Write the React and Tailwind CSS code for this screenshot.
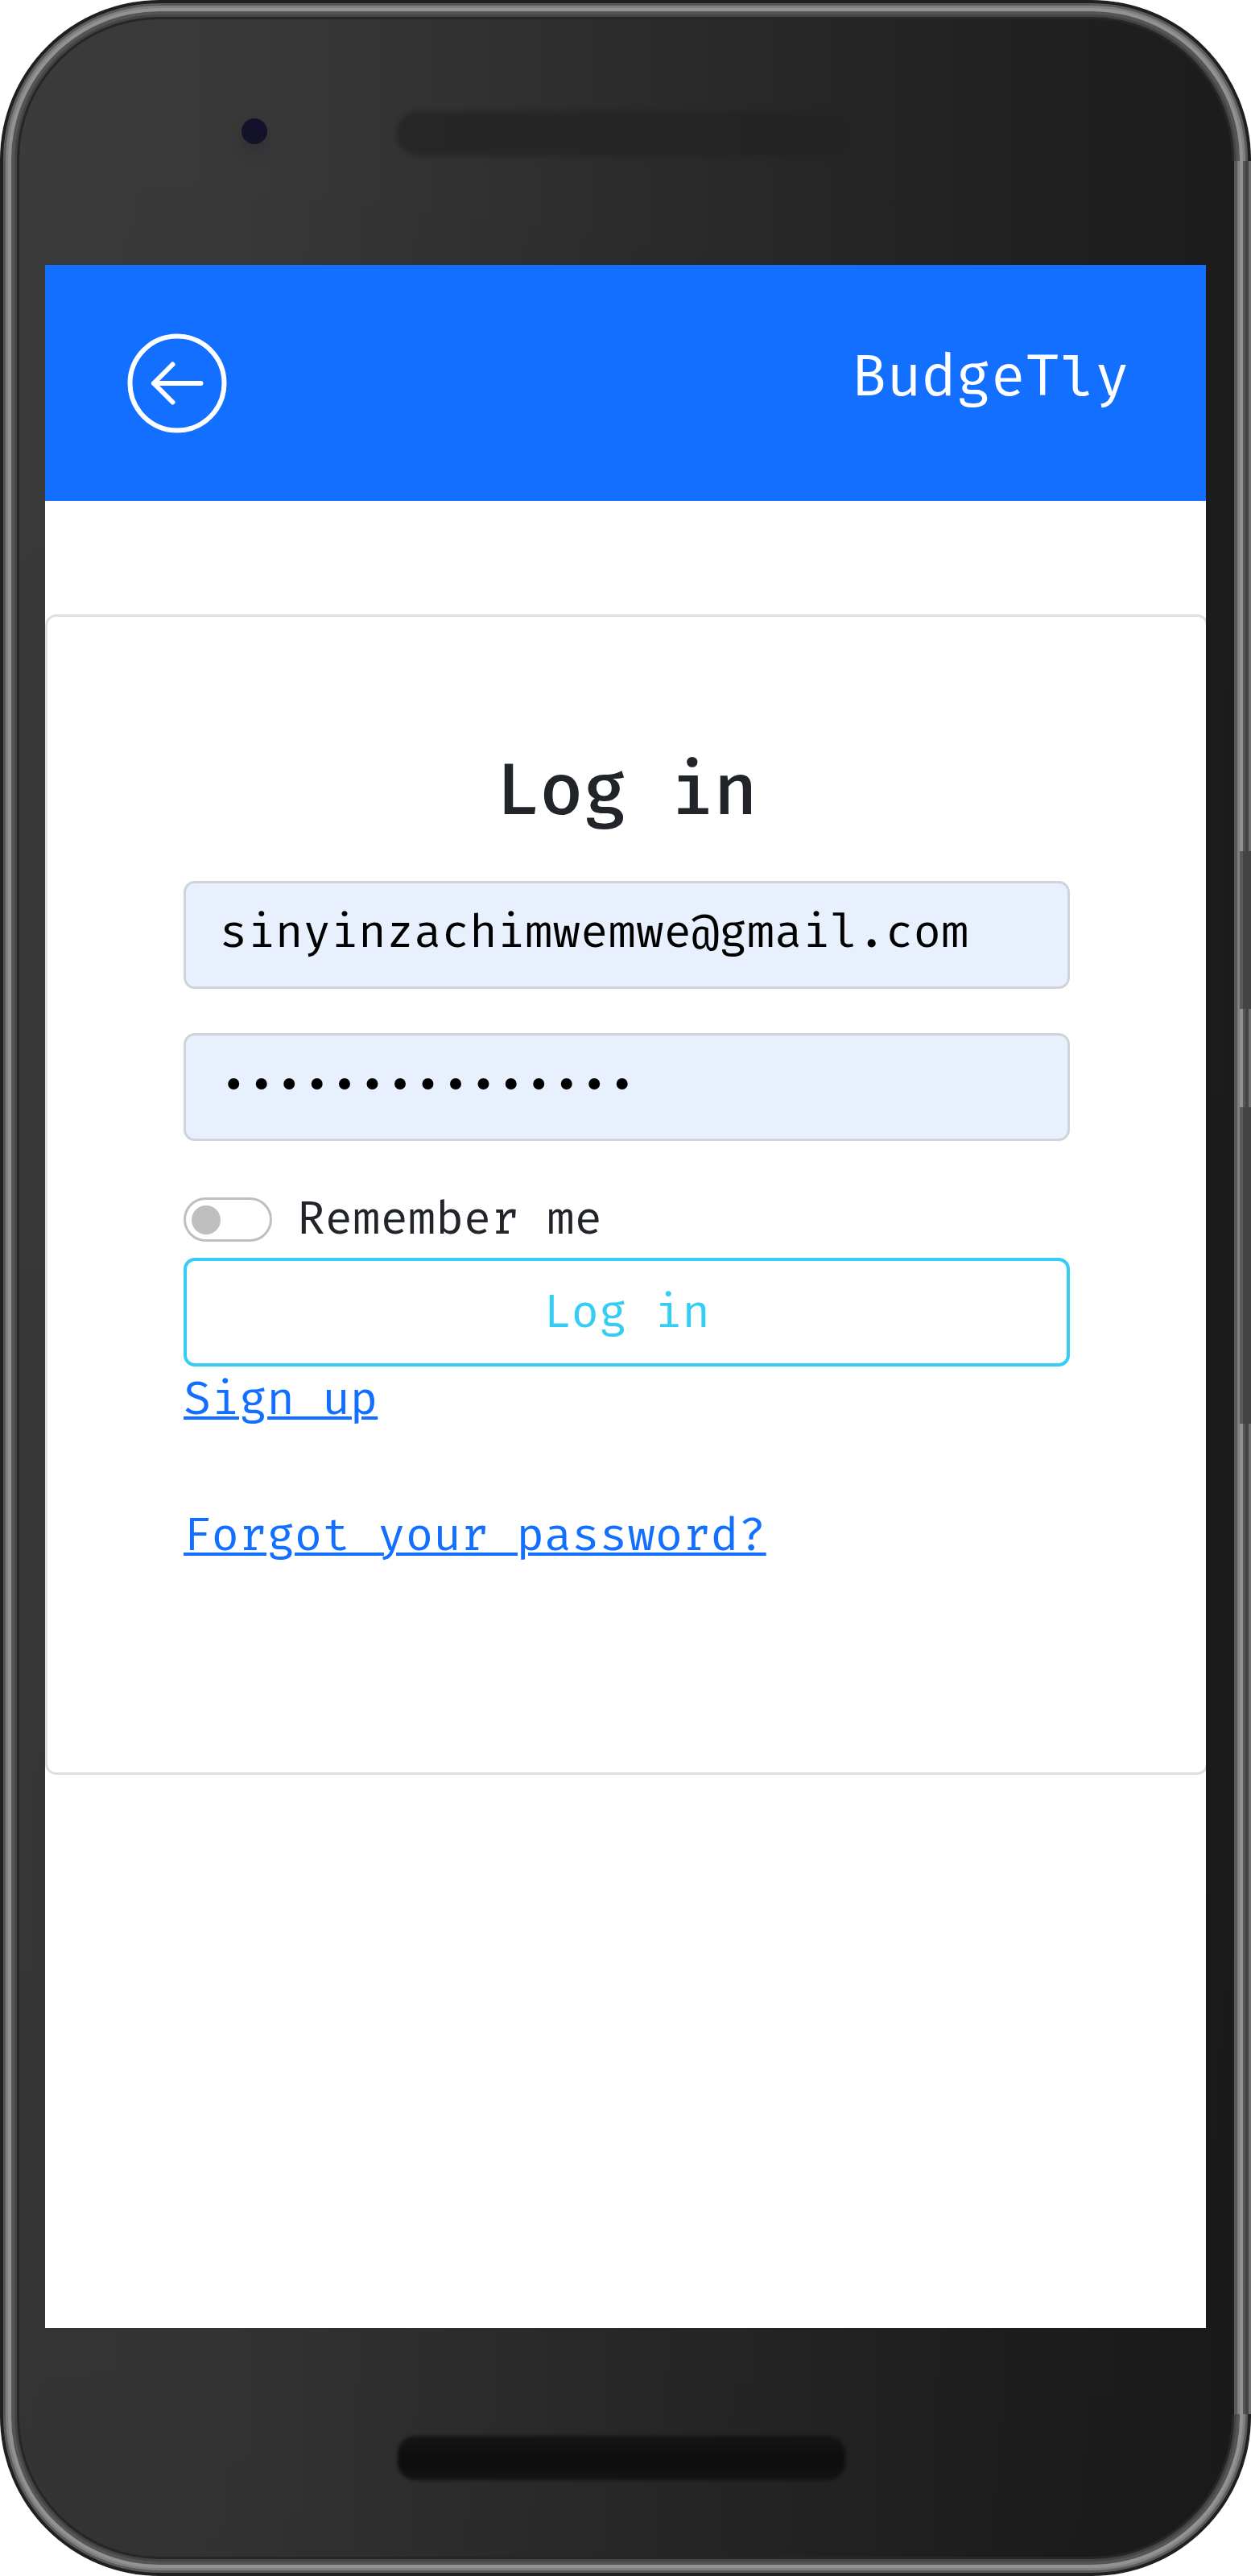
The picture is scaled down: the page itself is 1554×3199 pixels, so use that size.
import React from "react";

function BackIcon() {
  return (
    <svg className="h-[124px] w-[124px]" viewBox="0 0 124 124" fill="none" stroke="white" strokeWidth="6" strokeLinecap="round" strokeLinejoin="round">
      <circle cx="62" cy="62" r="58.5" />
      <path d="M91.5 62H33M56.5 38.5L33 62l23.5 23.5" />
    </svg>
  );
}

function Header() {
  return (
    <header className="flex h-[293px] items-center justify-between bg-[#126fff] pl-[102px] pr-[95px]">
      <a aria-label="Back">
        <BackIcon />
      </a>
      <span className="pb-[12px] text-[70px] leading-none text-white">BudgeTly</span>
    </header>
  );
}

function LoginCard() {
  return (
    <main className="mt-[141px] flex h-[1441px] w-[1445px] flex-col items-start rounded-[14px] border-[3px] border-[#dfdfdf] px-[169px] pt-[168px] text-[56px] leading-[84px] text-[#212529]">
      <h1 className="h-[160px] self-center text-[88px] font-medium leading-[100px]">Log in</h1>
      <div className="flex h-[134px] w-full items-center rounded-[14px] border-[3px] border-[#ced4da] bg-[#e8effd] pb-[4px] pl-[42px] text-black">
        sinyinzachimwemwe@gmail.com
      </div>
      <div className="mt-[55px] flex h-[134px] w-full items-center rounded-[14px] border-[3px] border-[#ced4da] bg-[#e8effd] pb-[3px] pl-[42px] text-black">
        •••••••••••••••
      </div>
      <label className="mt-[50px] flex h-[95px] items-start">
        <span className="mt-5 flex h-[55px] w-[110px] items-center rounded-full border-[3px] border-[#bfbfbf] pl-[7px]">
          <span className="h-9 w-9 rounded-full bg-[#bfbfbf]" />
        </span>
        <span className="ml-[31px] mt-[6px]">Remember me</span>
      </label>
      <button className="h-[135px] w-full rounded-[14px] border-4 border-[#35cdf3] pt-[2px] text-[#35cdf3]">Log in</button>
      <a className="text-[#126fff] underline decoration-[3.5px] underline-offset-[3px]">Sign up</a>
      <a className="mt-[85px] text-[#126fff] underline decoration-[3.5px] underline-offset-[3px]">Forgot your password?</a>
    </main>
  );
}

export default function App() {
  return (
    <div className="relative h-[3199px] w-[1554px] overflow-hidden bg-white font-['Fira_Code','DejaVu_Sans_Mono',monospace]">
      <div className="flex h-full w-[1554px] flex-col rounded-[198px] bg-[linear-gradient(to_bottom,rgba(0,0,0,0),rgba(0,0,0,0.12)),linear-gradient(to_right,#3b3b3b_0%,#393939_18%,#2c2c2c_50%,#202020_83%,#1c1c1c_100%)] pl-[56px] shadow-[inset_0_0_0_4px_#202020,inset_0_0_0_7px_#5a5a5a,inset_0_0_0_10px_#808080,inset_0_0_0_14px_#929292,inset_0_0_0_18px_#555555,inset_0_0_0_21px_#444444,inset_0_0_0_24px_#262626]">
        {/* Front camera and earpiece */}
        <div className="flex h-[329px] shrink-0 items-start pl-[244px]">
          <span className="mt-[147px] h-8 w-8 rounded-full bg-[#14112a] shadow-[0_10px_14px_2px_#333338]" />
          <span className="ml-[160px] mt-[138px] h-[56px] w-[566px] rounded-full bg-[linear-gradient(to_right,#272727,#242424)] blur-[3px]" />
        </div>
        <div className="h-[2562px] w-[1442px] shrink-0 overflow-hidden bg-white">
          <Header />
          <LoginCard />
        </div>
        {/* Bottom speaker */}
        <div className="flex h-[308px] shrink-0 pl-[438px] pt-[134px]">
          <span className="h-[55px] w-[556px] rounded-[22px] bg-[linear-gradient(to_bottom,#151515,#0f0f0f_40%,#0e0e0e_65%,#141414)] blur-[2px]" />
        </div>
      </div>
      {/* Right bezel edge with the power and volume keys */}
      <div className="absolute right-0 top-[200px] h-[2798px] w-[24px] bg-[linear-gradient(to_right,#1c1c1c_3px,#5a5a5a_3px,#5a5a5a_7px,#808080_7px,#808080_10px,#929292_10px,#929292_14px,#555555_14px,#555555_17px,#444444_17px,#444444_21px,#707070_21px)] pt-[857px]">
        <div className="ml-[10px] h-[196px] border-l-4 border-[#5a5a5a] bg-[#434343]" />
        <div className="ml-[10px] mt-[122px] h-[393px] border-l-4 border-[#5a5a5a] bg-[#434343]" />
      </div>
    </div>
  );
}
